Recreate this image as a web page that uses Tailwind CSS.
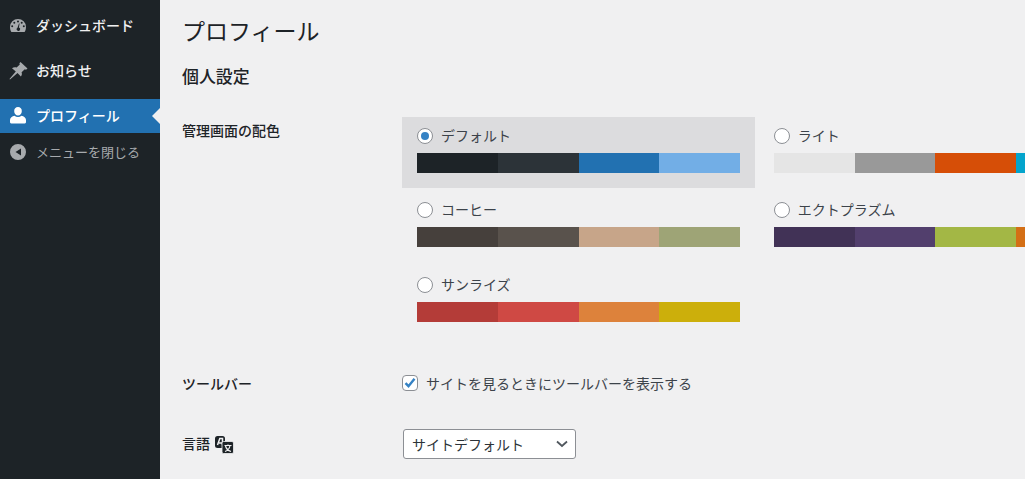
<!DOCTYPE html>
<html lang="ja"><head><meta charset="utf-8"><script src="https://cdn.jsdelivr.net/npm/@tailwindcss/browser@4"></script></head>
<body class="m-0 h-[479px] w-[1025px] overflow-hidden bg-[#f0f0f1] font-['Noto_Sans_CJK_JP','Noto_Sans',sans-serif] text-[14px] text-[#3c434a]">
<div class="flex h-[479px]">
<aside class="w-[160px] shrink-0 bg-[#1d2327] text-[14px] text-[#f0f0f1]">
  <div class="flex h-[50px] items-center gap-[7px] pl-[9px] font-medium">
    <svg class="h-[20px] w-[20px] text-[#a7aaad]" viewBox="0 0 20 20" fill="currentColor"><path fill-rule="evenodd" d="M9 4a8 8 0 0 0-8 8c0 1.800.5 3.600 1.400 5h13.200c.9-1.400 1.400-3.200 1.400-5a8 8 0 0 0-8-8zM9 5.500a1 1 0 1 1 0 2 1 1 0 0 1 0-2zM5.300 6.700a1 1 0 1 1 0 2 1 1 0 0 1 0-2zM12.700 6.700a1 1 0 1 1 0 2 1 1 0 0 1 0-2zM3.200 10.200a1 1 0 1 1 0 2 1 1 0 0 1 0-2zM14.800 10.200a1 1 0 1 1 0 2 1 1 0 0 1 0-2zM10 8.500l.6.100-.7 4a1.700 1.700 0 1 1-1.400.1z"/></svg>
    <span>ダッシュボード</span>
  </div>
  <div class="flex h-[40px] items-center gap-[7px] pl-[9px] font-medium">
    <svg class="h-[20px] w-[20px] text-[#a7aaad]" viewBox="0 0 20 20" fill="currentColor"><path d="M11.500 2l7 6.500-1.500 1.300-1.200-.6-3.200 3c.6 1.700.3 3.100-.7 4.300L8.500 13 1 19.500.5 19l6.300-7.500L3 8.300c1.300-1 2.900-1.200 4.600-.7l3.200-3-.4-1.300z"/></svg>
    <span>お知らせ</span>
  </div>
  <div class="mt-[9px] flex h-[34px] items-center gap-[7px] bg-[#2271b1] pl-[9px] font-medium text-white relative">
    <svg class="h-[20px] w-[20px]" viewBox="0 0 20 20" fill="currentColor"><path d="M9 1a3.800 3.800 0 0 1 3.800 4.200c0 2.300-1.700 4.300-3.800 4.300S5.200 7.500 5.200 5.200A3.800 3.800 0 0 1 9 1zM5.500 9.800c1 .8 2.200 1.200 3.500 1.200s2.500-.4 3.500-1.200c2.300.5 4.500 1.900 4.500 4.200v2.200c0 .8-1 1.300-2 1.300H3c-1 0-2-.5-2-1.300V14c0-2.300 2.200-3.700 4.500-4.200z"/></svg>
    <span class="-mt-[1px]">プロフィール</span>
    <span class="absolute right-0 top-[9px] h-0 w-0 border-y-[8px] border-r-[8px] border-y-transparent border-r-[#f0f0f1]"></span>
  </div>
  <div class="mt-[6px] flex h-[26px] items-center gap-[7px] pl-[9px] text-[13px] text-[#a7aaad]">
    <svg class="h-[20px] w-[20px] text-[#a7aaad]" viewBox="0 0 20 20" fill="currentColor"><path fill-rule="evenodd" d="M9 2a8 8 0 1 1 0 16A8 8 0 0 1 9 2zM12 6.500L6.500 10l5.500 3.500z"/></svg>
    <span>メニューを閉じる</span>
  </div>
</aside>
<main class="min-w-0 flex-1 overflow-hidden pl-[22px]">
  <h1 class="pt-[13px] text-[23px] leading-[34px] font-normal text-[#1d2327]">プロフィール</h1>
  <h2 class="mt-[17px] text-[16.9px] leading-[24px] font-medium text-[#1d2327]">個人設定</h2>
  <div class="mt-[29px] flex">
    <div class="w-[220px] shrink-0 pt-[4px] text-[14px] leading-[18px] font-medium text-[#1d2327]">管理画面の配色</div>
    <div class="grid w-[728px] shrink-0 grid-cols-[353px_353px] gap-x-[3.75px] gap-y-[3.5px]">
      <div class="h-[71px] bg-[#dcdcde] px-[15px] pt-[9.9px]">
        <label class="flex h-[18px] items-center gap-[8px]"><span class="flex h-[16px] w-[16px] items-center justify-center rounded-full border border-[#8c8f94] bg-white"><span class="h-[8px] w-[8px] rounded-full bg-[#3582c4]"></span></span><span class="-mt-[1px]">デフォルト</span></label>
        <div class="mt-[8.1px] flex h-[20px] w-[323px]"><i class="flex-1 bg-[#1d2327]"></i><i class="flex-1 bg-[#2c3338]"></i><i class="flex-1 bg-[#2271b1]"></i><i class="flex-1 bg-[#72aee6]"></i></div>
      </div>
      <div class="h-[71px] px-[15px] pt-[9.9px]">
        <label class="flex h-[18px] items-center gap-[8px]"><span class="h-[16px] w-[16px] rounded-full border border-[#8c8f94] bg-white"></span><span class="-mt-[1px]">ライト</span></label>
        <div class="mt-[8.1px] flex h-[20px] w-[323px]"><i class="flex-1 bg-[#e5e5e5]"></i><i class="flex-1 bg-[#999999]"></i><i class="flex-1 bg-[#d64e07]"></i><i class="flex-1 bg-[#04a4cc]"></i></div>
      </div>
      <div class="h-[71px] px-[15px] pt-[9.9px]">
        <label class="flex h-[18px] items-center gap-[8px]"><span class="h-[16px] w-[16px] rounded-full border border-[#8c8f94] bg-white"></span><span class="-mt-[1px]">コーヒー</span></label>
        <div class="mt-[8.1px] flex h-[20px] w-[323px]"><i class="flex-1 bg-[#46403c]"></i><i class="flex-1 bg-[#59524c]"></i><i class="flex-1 bg-[#c7a589]"></i><i class="flex-1 bg-[#9ea476]"></i></div>
      </div>
      <div class="h-[71px] px-[15px] pt-[9.9px]">
        <label class="flex h-[18px] items-center gap-[8px]"><span class="h-[16px] w-[16px] rounded-full border border-[#8c8f94] bg-white"></span><span class="-mt-[1px]">エクトプラズム</span></label>
        <div class="mt-[8.1px] flex h-[20px] w-[323px]"><i class="flex-1 bg-[#413256]"></i><i class="flex-1 bg-[#523f6d]"></i><i class="flex-1 bg-[#a3b745]"></i><i class="flex-1 bg-[#d46f15]"></i></div>
      </div>
      <div class="h-[71px] px-[15px] pt-[9.9px]">
        <label class="flex h-[18px] items-center gap-[8px]"><span class="h-[16px] w-[16px] rounded-full border border-[#8c8f94] bg-white"></span><span class="-mt-[1px]">サンライズ</span></label>
        <div class="mt-[8.1px] flex h-[20px] w-[323px]"><i class="flex-1 bg-[#b43c38]"></i><i class="flex-1 bg-[#cf4944]"></i><i class="flex-1 bg-[#dd823b]"></i><i class="flex-1 bg-[#ccaf0b]"></i></div>
      </div>
    </div>
  </div>
  <div class="mt-[36px] flex items-center">
    <div class="w-[220px] shrink-0 text-[14px] leading-[20px] font-medium text-[#1d2327]">ツールバー</div>
    <label class="flex items-center gap-[8px] text-[14px] leading-[20px]">
      <span class="flex h-[16px] w-[16px] items-center justify-center rounded-[4px] border border-[#8c8f94] bg-white"><svg class="h-[14px] w-[14px] text-[#3582c4]" viewBox="0 0 14 14" fill="none" stroke="currentColor" stroke-width="2.400"><path d="M2.500 7.200l3 3 6-7.400"/></svg></span>
      サイトを見るときにツールバーを表示する
    </label>
  </div>
  <div class="mt-[36px] flex items-center">
    <div class="flex w-[221px] shrink-0 -translate-y-[1px] items-center gap-[4px] text-[14px] leading-[20px] font-medium text-[#1d2327]">言語
      <svg class="mt-[4px] h-[20px] w-[20px]" viewBox="0 0 20 20"><rect x="1" y="1" width="10" height="12" rx="2.500" fill="#1d2327"/><path d="M3.500 10l2.300-6.500h2.700v6.500M5 8h3.500" fill="none" stroke="#f0f0f1" stroke-width="1.500"/><rect x="8" y="6.500" width="11.500" height="12" rx="1.500" fill="#1d2327" stroke="#f0f0f1" stroke-width=".8"/><path d="M10.500 10.500h7M14 9.500v1M11 16.500c3-1 4.500-3 5-6M11.500 11c.5 2 2.500 4.500 5.500 5.500" fill="none" stroke="#f0f0f1" stroke-width="1.200"/></svg>
    </div>
    <div class="flex h-[30px] w-[173px] items-center justify-between rounded-[3px] border border-[#8c8f94] bg-white pr-[7px] pl-[8px] text-[14px] text-[#2c3338]">
      <span>サイトデフォルト</span>
      <svg class="h-[10px] w-[12px] text-[#50575e]" viewBox="0 0 12 10" fill="none" stroke="currentColor" stroke-width="1.800"><path d="M1 2.500L6 7l5-4.500"/></svg>
    </div>
  </div>
</main>
</div>
</body></html>
